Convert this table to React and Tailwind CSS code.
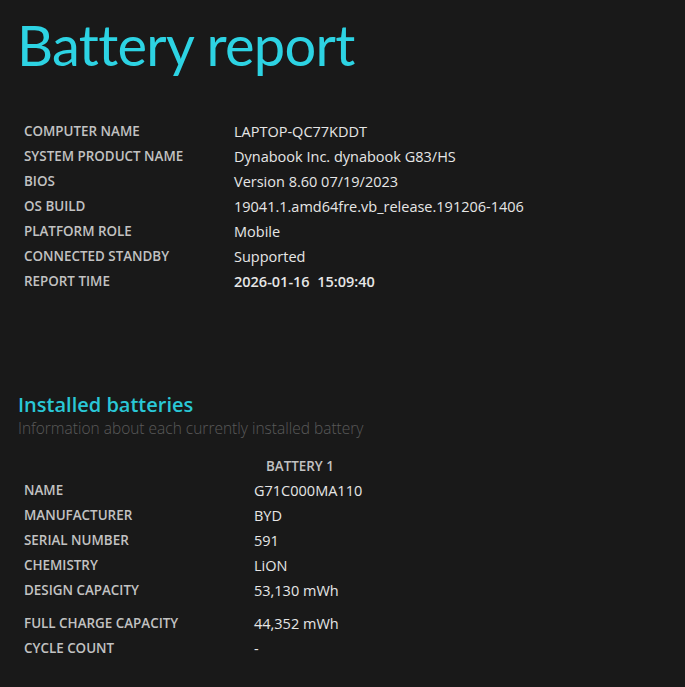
const info = [
  ["COMPUTER NAME", "LAPTOP-QC77KDDT"],
  ["SYSTEM PRODUCT NAME", "Dynabook Inc. dynabook G83/HS"],
  ["BIOS", "Version 8.60 07/19/2023"],
  ["OS BUILD", "19041.1.amd64fre.vb_release.191206-1406"],
  ["PLATFORM ROLE", "Mobile"],
  ["CONNECTED STANDBY", "Supported"],
];

const battery = [
  ["NAME", "G71C000MA110"],
  ["MANUFACTURER", "BYD"],
  ["SERIAL NUMBER", "591"],
  ["CHEMISTRY", "LiON"],
  ["DESIGN CAPACITY", "53,130 mWh"],
];

function Row({ label, value, width, valueClass = "" }) {
  return (
    <div className="flex h-[25px] items-center">
      <div className={width + " text-[13.4px] font-semibold text-[#c2c2c2]"}>{label}</div>
      <div className={"text-[14.5px] text-[#e6e6e6] " + valueClass}>{value}</div>
    </div>
  );
}

export default function App() {
  return (
    <div className="min-h-[687px] w-[685px] bg-[#191919] font-['Open_Sans',sans-serif]">
      <h1 className="pl-[17px] pt-[8px] font-['Lato',sans-serif] text-[56px] font-normal leading-[74px] tracking-[-0.7px] text-[#2dd3e3]">
        Battery report
      </h1>
      <div className="pl-[24px] pt-[37px]">
        {info.map(([l, v]) => (
          <Row key={l} label={l} value={v} width="w-[210px]" />
        ))}
        <Row label="REPORT TIME" value="2026-01-16  15:09:40" width="w-[210px]" valueClass="font-semibold whitespace-pre" />
      </div>

      <div className="pl-[18px] pt-[99px]">
        <h2 className="text-[20px] font-semibold leading-[24px] text-[#2ac7d6]">Installed batteries</h2>
        <p className="text-[15.5px] font-light leading-[22px] text-[#5a5a5a]">
          Information about each currently installed battery
        </p>
      </div>

      <div className="pl-[24px] pt-[16px]">
        <div className="flex h-[23px] items-center">
          <div className="w-[242px]" />
          <div className="text-[13.4px] font-semibold text-[#c2c2c2]">BATTERY 1</div>
        </div>
        {battery.map(([l, v]) => (
          <Row key={l} label={l} value={v} width="w-[230px]" />
        ))}
        <div className="h-[8px]" />
        {[["FULL CHARGE CAPACITY", "44,352 mWh"], ["CYCLE COUNT", "-"]].map(([l, v]) => (
          <Row key={l} label={l} value={v} width="w-[230px]" />
        ))}
      </div>
    </div>
  );
}
